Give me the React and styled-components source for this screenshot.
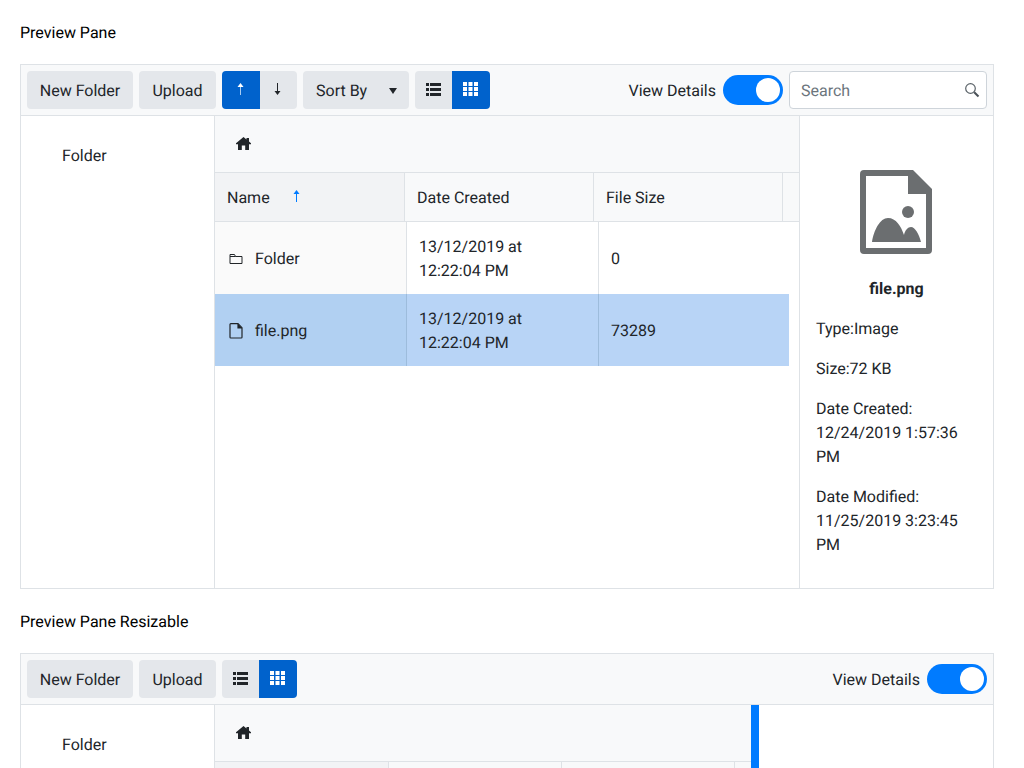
import React from 'react';
import styled, { createGlobalStyle } from 'styled-components';

const GlobalStyle = createGlobalStyle`
    html, body {
        margin: 0;
        height: 768px;
        overflow: hidden;
        background: #fff;
    }
    body {
        font-family: Roboto, "Liberation Sans", sans-serif;
        font-size: 16px;
        line-height: 24px;
        color: #212529;
        text-rendering: geometricPrecision;
    }
`;

const Page = styled.div`
    display: flex;
    flex-direction: column;
    height: 768px;
    padding: 20px 30px 0 20px;
    box-sizing: border-box;
`;

const Title = styled.h2`
    flex: none;
    margin: 0 0 20px;
    padding-top: 1px;
    height: 24px;
    box-sizing: border-box;
    font-size: 16px;
    font-weight: 400;
    line-height: 24px;
    color: #000;
`;

const Pane = styled.section`
    display: flex;
    flex-direction: column;
    flex: ${props => (props.$clipped ? '1' : 'none')};
    height: ${props => (props.$clipped ? 'auto' : '525px')};
    min-height: 0;
    overflow: hidden;
    margin-bottom: ${props => (props.$clipped ? '0' : '20px')};
    border: 1px solid #dee2e6;
    border-bottom: ${props => (props.$clipped ? 'none' : '1px solid #dee2e6')};
    box-sizing: border-box;
`;

const Toolbar = styled.div`
    display: flex;
    align-items: center;
    flex: none;
    gap: 6px;
    height: 51px;
    padding: 6px;
    background: #f8f9fa;
    border-bottom: 1px solid #dee2e6;
    box-sizing: border-box;
`;

const ToolButton = styled.button`
    display: flex;
    align-items: center;
    justify-content: ${props => (props.$between ? 'space-between' : 'center')};
    height: 38px;
    width: ${props => props.$width}px;
    padding: ${props => (props.$between ? '1px 12px 0 13px' : '1px 0 0')};
    border: none;
    border-radius: 4px;
    background: #e4e7eb;
    color: #212529;
    font: inherit;
    text-rendering: inherit;
`;

const Group = styled.div`
    display: flex;
    border-radius: 4px;
    overflow: hidden;
`;

const GroupButton = styled.button`
    display: flex;
    align-items: center;
    justify-content: center;
    width: ${props => props.$width}px;
    height: 38px;
    padding: 0 2px 2px 0;
    border: none;
    background: ${props => (props.$active ? '#0062cc' : '#e4e7eb')};
    color: ${props => (props.$active ? '#fff' : '#212529')};
`;

const Spacer = styled.div`
    flex: 1;
`;

const ToggleLabel = styled.span`
    margin-right: 1px;
    padding-top: 1px;
`;

const Toggle = styled.span`
    display: flex;
    justify-content: flex-end;
    align-items: center;
    width: 60px;
    height: 30px;
    padding-right: 3px;
    border-radius: 15px;
    background: #007bff;
    box-sizing: border-box;
    &::after {
        content: '';
        width: 24px;
        height: 24px;
        border-radius: 50%;
        background: #fff;
    }
`;

const Search = styled.label`
    display: flex;
    align-items: center;
    width: 198px;
    height: 38px;
    padding: 0 6px 0 11px;
    border: 1px solid #ced4da;
    border-radius: 4px;
    background: #fff;
    box-sizing: border-box;
`;

const SearchInput = styled.input`
    flex: 1;
    min-width: 0;
    padding: 1px 0 0;
    border: none;
    outline: none;
    background: transparent;
    font: inherit;
    text-rendering: inherit;
    &::placeholder {
        color: #6c757d;
        opacity: 1;
    }
`;

const Body = styled.div`
    display: flex;
    flex: 1;
    min-height: 0;
`;

const Tree = styled.aside`
    flex: none;
    width: 194px;
    padding: 28px 0 0 41px;
    border-right: 1px solid #dee2e6;
    box-sizing: border-box;
`;

const Main = styled.div`
    flex: ${props => (props.$width ? 'none' : '1')};
    width: ${props => (props.$width ? `${props.$width}px` : 'auto')};
    min-width: 0;
`;

const Breadcrumb = styled.div`
    display: flex;
    align-items: center;
    height: 57px;
    padding: 0 0 2px 21px;
    background: #f8f9fa;
    border-bottom: 1px solid #dee2e6;
    box-sizing: border-box;
`;

const HeaderRow = styled.div`
    display: grid;
    grid-template-columns: ${props => props.$columns};
    height: 49px;
    background: #f8f9fa;
    border-bottom: 1px solid #dee2e6;
    box-sizing: border-box;
`;

const HeaderCell = styled.div`
    display: flex;
    align-items: center;
    padding: 1px 0 0 12px;
    border-right: 1px solid #dee2e6;
    background: ${props => (props.$sorted ? '#f2f3f5' : 'transparent')};
    &:last-child {
        border-right: none;
    }
`;

const SortMark = styled.span`
    display: flex;
    margin: -4px 0 0 23px;
`;

const DataRow = styled.div`
    display: grid;
    grid-template-columns: 192px 192px 190px;
    width: 574px;
    height: 72px;
    background: ${props => (props.$selected ? '#b8d4f6' : '#fff')};
`;

const NameCell = styled.div`
    display: flex;
    align-items: center;
    gap: 12px;
    padding: 1px 0 0 14px;
    background: ${props => (props.$selected ? '#b1d0f2' : '#fafafa')};
    border-right: 1px solid ${props => (props.$selected ? '#9dbcdc' : '#dee2e6')};
`;

const DataCell = styled.div`
    display: flex;
    align-items: center;
    padding: 1px 12px 0;
    border-right: 1px solid ${props => (props.$selected ? '#9dbcdc' : '#dee2e6')};
    &:last-child {
        border-right: none;
    }
`;

const Resizer = styled.div`
    flex: none;
    width: 8px;
    background: #007bff;
`;

const Details = styled.aside`
    flex: none;
    width: 194px;
    padding: 54px 16px 0;
    border-left: 1px solid #dee2e6;
    box-sizing: border-box;
`;

const Preview = styled.div`
    display: flex;
    justify-content: center;
    margin: 0 1px 23px 0;
`;

const FileName = styled.div`
    margin-bottom: 16px;
    font-weight: 700;
    text-align: center;
`;

const Info = styled.p`
    margin: 0 0 16px;
`;

const Blank = styled.div`
    flex: 1;
`;

const ListGlyph = styled.svg`
    margin-left: 2px;
`;

const HomeIcon = () => (
    <svg width="15" height="13" viewBox="0 0 15 13" fill="#212529">
        <path d="M7.500 0L10.500 2.500V1H13V4.600L15 6.300V7.200H13V13H9.200V8.500H5.800V13H2V7.200H0V6.300z" />
    </svg>
);

const ArrowIcon = ({ down, color, stem, height = 12 }) => (
    <svg width="7" height={height} viewBox={`0 0 7 ${height}`}>
        <g transform={down ? `rotate(180 3.500 ${height / 2})` : undefined}>
            <rect x="3" y="3" width="1" height={height - 3} fill={stem || color} />
            <path d="M3.500 0L6.500 4H.5z" fill={color} />
        </g>
    </svg>
);

const CaretIcon = () => (
    <svg width="8" height="6" viewBox="0 0 8 6" fill="#212529">
        <path d="M0 0H8L4 6z" />
    </svg>
);

const ListIcon = () => (
    <ListGlyph width="15" height="13" viewBox="0 0 15 13" fill="#212529">
        <rect x="0" y="0" width="3" height="3" />
        <rect x="4" y="0" width="11" height="3" />
        <rect x="0" y="5" width="3" height="3" />
        <rect x="4" y="5" width="11" height="3" />
        <rect x="0" y="10" width="3" height="3" />
        <rect x="4" y="10" width="11" height="3" />
    </ListGlyph>
);

const GridIcon = () => (
    <svg width="15" height="14" viewBox="0 0 15 14" fill="#fff">
        {[0, 5, 10].map(y =>
            [0, 5.500, 11].map(x => <rect key={`${x}-${y}`} x={x} y={y} width="4" height="4" />)
        )}
    </svg>
);

const FolderIcon = () => (
    <svg width="14" height="14" viewBox="0 0 14 14" fill="none" stroke="#212529" strokeWidth="1">
        <path d="M1 11.500V2.500h4.500l1 2h6.500v7z" />
        <path d="M1 4.500h5.500" />
    </svg>
);

const FileIcon = () => (
    <svg width="14" height="16" viewBox="0 0 14 16" fill="none" stroke="#212529" strokeWidth="1.200">
        <path d="M1 1.500a.8.8 0 0 1 .8-.8h7.200l4 4v9.500a.8.8 0 0 1-.8.8H1.800a.8.8 0 0 1-.8-.8z" />
        <path d="M9 1v4h4" fill="#212529" />
    </svg>
);

const SearchIcon = () => (
    <svg width="16" height="16" viewBox="0 0 16 16" fill="none">
        <circle cx="6.500" cy="6.500" r="4.800" stroke="#5a6268" strokeWidth="1.200" />
        <path d="M10.200 10.200L14.500 14.500" stroke="#495057" strokeWidth="2" />
    </svg>
);

const ImageFileIcon = () => (
    <svg width="72" height="84" viewBox="0 0 72 84" fill="#6b6e70">
        <path
            fillRule="evenodd"
            d="M4 0H53L72 19V80a4 4 0 0 1-4 4H4a4 4 0 0 1-4-4V4a4 4 0 0 1 4-4zM6 6V78H66V24H48V6z"
        />
        <circle cx="48" cy="42" r="6" />
        <path d="M12 72C14 60 20 48 28 48C36 48 41 56 44 65C45 60 48 57 51 57C55 57 59 64 61 72z" />
    </svg>
);

const ViewButtons = () => (
    <Group>
        <GroupButton $width={37}>
            <ListIcon />
        </GroupButton>
        <GroupButton $width={38} $active>
            <GridIcon />
        </GroupButton>
    </Group>
);

const App = () => (
    <Page>
        <GlobalStyle />
        <Title>Preview Pane</Title>
        <Pane>
            <Toolbar>
                <ToolButton $width={106}>New Folder</ToolButton>
                <ToolButton $width={77}>Upload</ToolButton>
                <Group>
                    <GroupButton $width={38} $active>
                        <ArrowIcon color="#fff" stem="#a9cdf2" />
                    </GroupButton>
                    <GroupButton $width={37}>
                        <ArrowIcon down color="#212529" />
                    </GroupButton>
                </Group>
                <ToolButton $width={106} $between>
                    Sort By
                    <CaretIcon />
                </ToolButton>
                <ViewButtons />
                <Spacer />
                <ToggleLabel>View Details</ToggleLabel>
                <Toggle />
                <Search>
                    <SearchInput placeholder="Search" />
                    <SearchIcon />
                </Search>
            </Toolbar>
            <Body>
                <Tree>Folder</Tree>
                <Main>
                    <Breadcrumb>
                        <HomeIcon />
                    </Breadcrumb>
                    <HeaderRow $columns="190px 189px 189px 1fr">
                        <HeaderCell $sorted>
                            Name
                            <SortMark>
                                <ArrowIcon color="#007bff" />
                            </SortMark>
                        </HeaderCell>
                        <HeaderCell>Date Created</HeaderCell>
                        <HeaderCell>File Size</HeaderCell>
                        <HeaderCell />
                    </HeaderRow>
                    <DataRow>
                        <NameCell>
                            <FolderIcon />
                            Folder
                        </NameCell>
                        <DataCell>13/12/2019 at 12:22:04 PM</DataCell>
                        <DataCell>0</DataCell>
                    </DataRow>
                    <DataRow $selected>
                        <NameCell $selected>
                            <FileIcon />
                            file.png
                        </NameCell>
                        <DataCell $selected>13/12/2019 at 12:22:04 PM</DataCell>
                        <DataCell $selected>73289</DataCell>
                    </DataRow>
                </Main>
                <Details>
                    <Preview>
                        <ImageFileIcon />
                    </Preview>
                    <FileName>file.png</FileName>
                    <Info>Type:Image</Info>
                    <Info>Size:72 KB</Info>
                    <Info>Date Created: 12/24/2019 1:57:36 PM</Info>
                    <Info>Date Modified: 11/25/2019 3:23:45 PM</Info>
                </Details>
            </Body>
        </Pane>
        <Title>Preview Pane Resizable</Title>
        <Pane $clipped>
            <Toolbar>
                <ToolButton $width={106}>New Folder</ToolButton>
                <ToolButton $width={77}>Upload</ToolButton>
                <ViewButtons />
                <Spacer />
                <ToggleLabel>View Details</ToggleLabel>
                <Toggle />
            </Toolbar>
            <Body>
                <Tree>Folder</Tree>
                <Main $width={536}>
                    <Breadcrumb>
                        <HomeIcon />
                    </Breadcrumb>
                    <HeaderRow $columns="174px 173px 173px 1fr">
                        <HeaderCell $sorted />
                        <HeaderCell />
                        <HeaderCell />
                        <HeaderCell />
                    </HeaderRow>
                </Main>
                <Resizer />
                <Blank />
            </Body>
        </Pane>
    </Page>
);

export default App;
